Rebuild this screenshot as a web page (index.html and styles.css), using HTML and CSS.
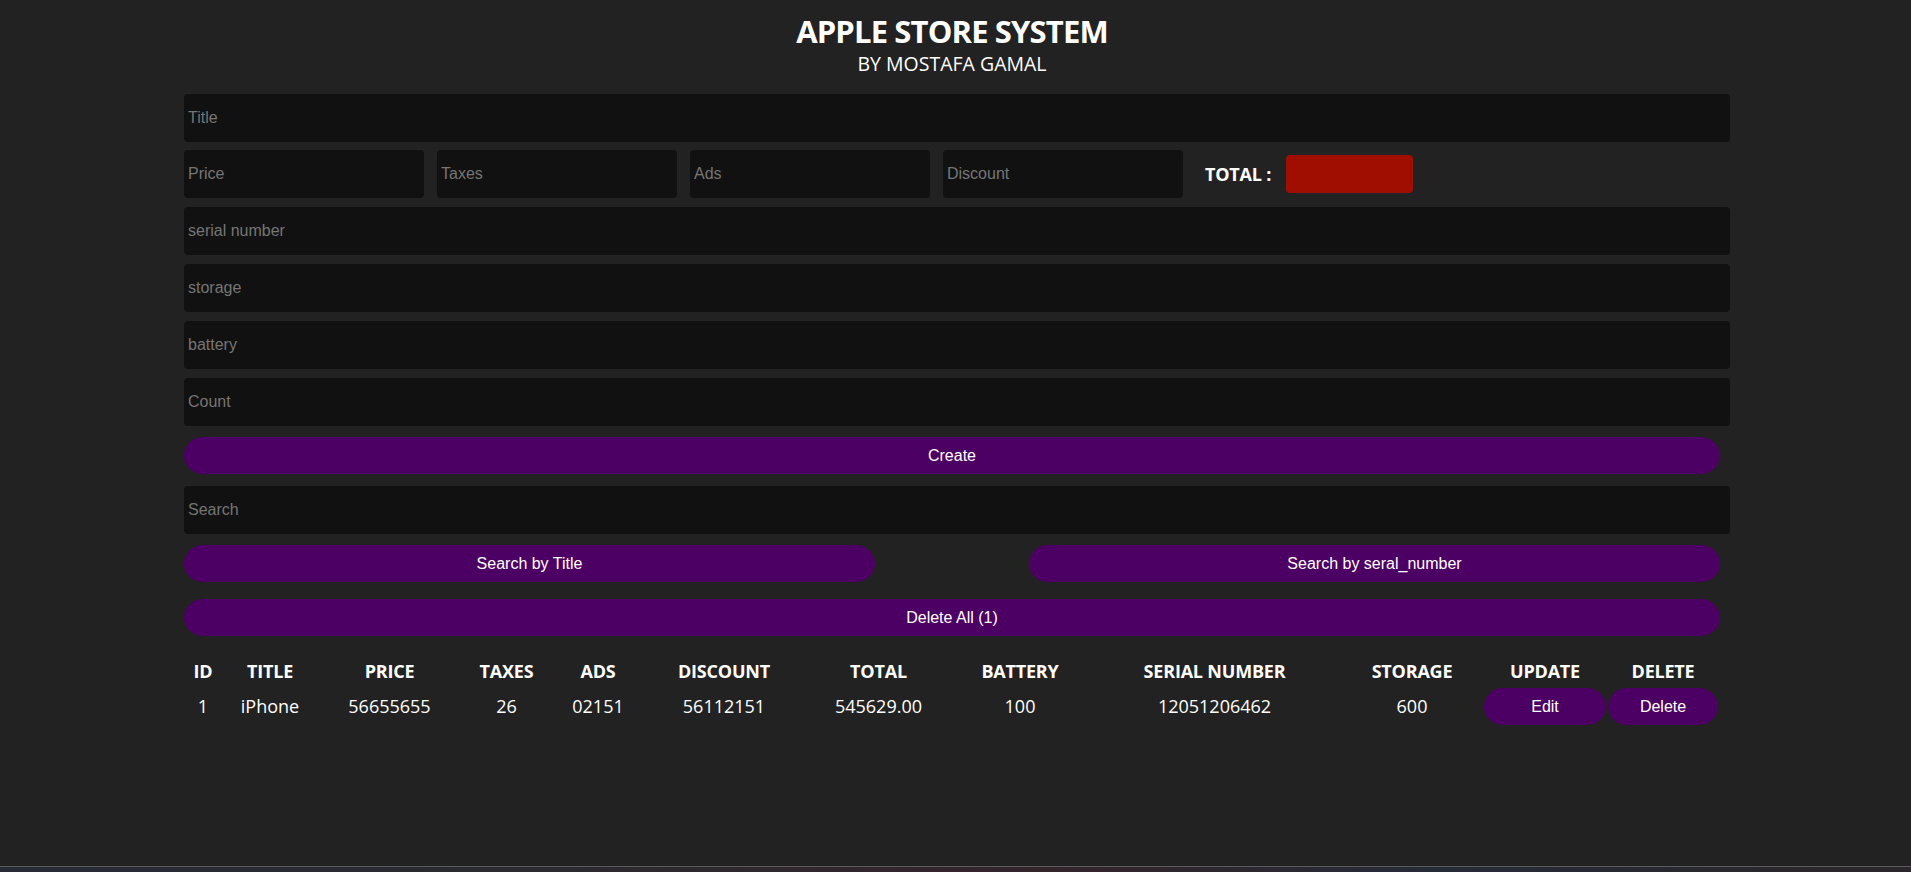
FILE: index.html
```html
<!DOCTYPE html>
<html lang="en">
<head>
<meta charset="utf-8">
<title>Apple Store System</title>
<link rel="stylesheet" href="styles.css">
</head>
<body>
<div class="page">
  <div class="crud">
    <header class="head">
      <h1 class="head-title">APPLE STORE SYSTEM</h1>
      <p class="head-sub">BY MOSTAFA GAMAL</p>
    </header>

    <div class="inputs">
      <input class="field" type="text" placeholder="Title">
      <div class="price-row">
        <input class="field field-small" type="text" placeholder="Price">
        <input class="field field-small" type="text" placeholder="Taxes">
        <input class="field field-small" type="text" placeholder="Ads">
        <input class="field field-small" type="text" placeholder="Discount">
        <span class="total-label">TOTAL :</span>
        <span class="total-box"></span>
      </div>
      <input class="field" type="text" placeholder="serial number">
      <input class="field" type="text" placeholder="storage">
      <input class="field" type="text" placeholder="battery">
      <input class="field" type="text" placeholder="Count">
    </div>

    <button class="btn btn-create">Create</button>

    <input class="field field-search" type="text" placeholder="Search">

    <div class="search-btns">
      <button class="btn btn-half">Search by Title</button>
      <button class="btn btn-half">Search by seral_number</button>
    </div>

    <button class="btn btn-delete-all">Delete All (1)</button>

    <table class="table">
      <colgroup>
        <col class="c-id"><col class="c-title"><col class="c-price"><col class="c-taxes">
        <col class="c-ads"><col class="c-discount"><col class="c-total"><col class="c-battery">
        <col class="c-serial"><col class="c-storage"><col class="c-update"><col class="c-delete">
      </colgroup>
      <thead>
        <tr>
          <th>ID</th><th>TITLE</th><th>PRICE</th><th>TAXES</th><th>ADS</th><th>DISCOUNT</th>
          <th>TOTAL</th><th>BATTERY</th><th>SERIAL NUMBER</th><th>STORAGE</th><th>UPDATE</th><th>DELETE</th>
        </tr>
      </thead>
      <tbody>
        <tr>
          <td>1</td><td>iPhone</td><td>56655655</td><td>26</td><td>02151</td><td>56112151</td>
          <td>545629.00</td><td>100</td><td>12051206462</td><td>600</td>
          <td><button class="btn btn-row">Edit</button></td>
          <td><button class="btn btn-row">Delete</button></td>
        </tr>
      </tbody>
    </table>
  </div>
  <div class="taskbar"></div>
</div>
</body>
</html>
```

FILE: styles.css
```css
* {
  box-sizing: border-box;
}

html, body {
  margin: 0;
  padding: 0;
  background: #222222;
  color: #ffffff;
}

.page {
  min-height: 100vh;
  display: flex;
  flex-direction: column;
}

.crud {
  width: 1536px;
  margin-left: 184px;
  display: flex;
  flex-direction: column;
}

.head {
  text-align: center;
  padding-top: 11px;
  font-family: "Open Sans", "Noto Sans", sans-serif;
}

.head-title {
  margin: 0;
  font-size: 31px;
  line-height: 40px;
  font-weight: 700;
  letter-spacing: -0.85px;
}

.head-sub {
  margin: 1px 0 0;
  font-size: 19.5px;
  line-height: 24px;
  font-weight: 400;
}

.inputs {
  margin-top: 18px;
  display: flex;
  flex-direction: column;
  gap: 9px;
}

.field {
  display: block;
  width: 1546px;
  height: 48px;
  border: none;
  outline: none;
  background: #111111;
  border-radius: 4px;
  padding: 0 4px;
  color: #ffffff;
  font-family: "Liberation Sans", Arial, sans-serif;
  font-size: 16px;
}

.field::placeholder {
  color: #757575;
}

.price-row {
  display: flex;
  align-items: center;
  gap: 13px;
  margin-top: -1px;
}

.field-small {
  width: 240px;
  flex: none;
}

.total-label {
  margin-left: 9px;
  font-family: "Open Sans", "Noto Sans", sans-serif;
  font-weight: 700;
  font-size: 18px;
  letter-spacing: -0.2px;
}

.total-box {
  display: block;
  width: 127px;
  height: 38px;
  margin-left: 2px;
  background: #a00e02;
  border-radius: 4px;
}

.btn {
  display: block;
  border: none;
  background: #4c0063;
  color: #ffffff;
  font-family: "Liberation Sans", Arial, sans-serif;
  font-size: 16px;
  border-radius: 19px;
  cursor: pointer;
  padding: 0;
}

.btn-create {
  width: 100%;
  height: 37px;
  margin-top: 11px;
}

.field-search {
  margin-top: 12px;
}

.search-btns {
  margin-top: 11px;
  display: flex;
  justify-content: space-between;
}

.btn-half {
  width: 691px;
  height: 37px;
}

.btn-delete-all {
  width: 100%;
  height: 37px;
  margin-top: 17px;
}

.table {
  margin-top: 19px;
  width: 1536px;
  table-layout: fixed;
  border-collapse: separate;
  border-spacing: 2px;
  font-family: "Open Sans", "Noto Sans", sans-serif;
  text-align: center;
}

.table th {
  font-size: 18px;
  font-weight: 700;
  line-height: 25px;
  padding: 2px 0 1px;
  letter-spacing: -0.2px;
}

.table td {
  font-size: 18px;
  font-weight: 400;
  line-height: 25px;
  padding: 1px 0;
}

.c-id { width: 34px; }
.c-title { width: 96px; }
.c-price { width: 139px; }
.c-taxes { width: 91px; }
.c-ads { width: 88px; }
.c-discount { width: 160px; }
.c-total { width: 145px; }
.c-battery { width: 134px; }
.c-serial { width: 251px; }
.c-storage { width: 140px; }
.c-update { width: 122px; }
.c-delete { width: 110px; }

.btn-row {
  width: 100%;
  height: 37px;
}

.taskbar {
  margin-top: auto;
  height: 6px;
  border-top: 1px solid #5a5a5a;
  background: linear-gradient(90deg, #262a33 0%, #2b2a30 30%, #33242a 55%, #252b36 75%, #2b2629 100%);
}
```
